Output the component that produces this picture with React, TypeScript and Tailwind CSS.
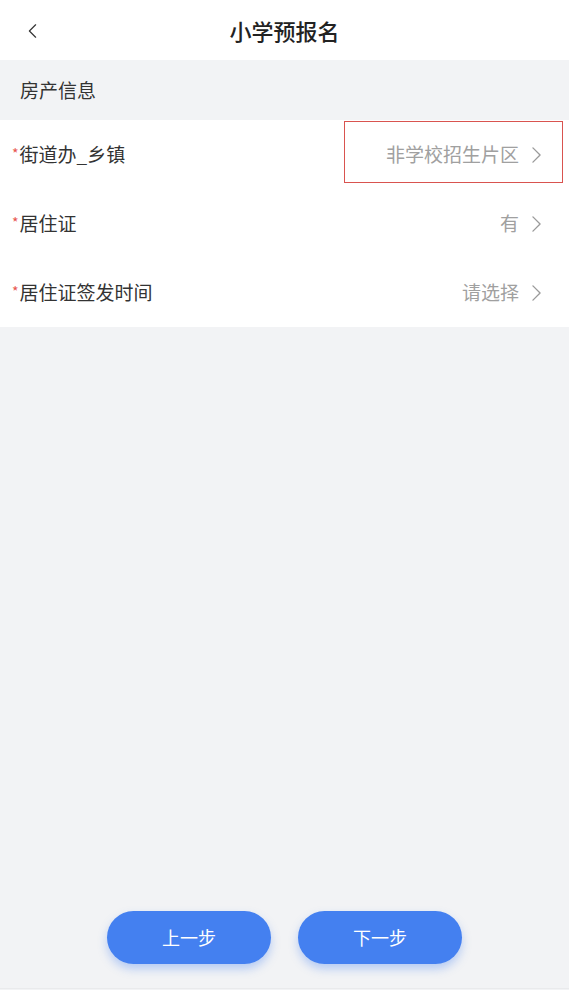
const fields = [
  { label: "街道办_乡镇", value: "非学校招生片区", marked: true },
  { label: "居住证", value: "有" },
  { label: "居住证签发时间", value: "请选择" },
]

function Arrow({ back, className }: { back?: boolean; className?: string }) {
  return (
    <svg viewBox="0 0 10 18" className={className} fill="none" stroke="currentColor" strokeWidth={1.5} strokeLinecap="round" strokeLinejoin="round">
      {back ? <polyline points="9,1 1,9 9,17" /> : <polyline points="1,1 9,9 1,17" />}
    </svg>
  )
}

function FieldRow({ label, value, marked }: { label: string; value: string; marked?: boolean }) {
  return (
    <div className="relative flex h-[69px] items-center justify-between pl-[12px] pr-[28px]">
      <div className="flex items-center">
        <span className="mr-[1px] -mt-[3px] text-[14px] leading-none text-[#e8554e]">*</span>
        <span className="text-[19px] text-[#333333]">{label}</span>
      </div>
      <div className="flex items-center gap-[13px]">
        <span className="text-[19px] text-[#a0a0a0]">{value}</span>
        <Arrow className="h-[16px] w-[9px] text-[#9a9a9a]" />
      </div>
      {marked && (
        <div className="pointer-events-none absolute left-[344px] top-[1px] h-[62px] w-[219px] border-[1.5px] border-[#d9534f]" />
      )}
    </div>
  )
}

export default function App() {
  return (
    <div
      className="flex h-[990px] w-full flex-col bg-[#f2f3f5]"
      style={{ fontFamily: '"Noto Sans CJK SC", "Noto Sans", sans-serif' }}
    >
      <header className="relative flex h-[60px] items-center justify-center bg-white">
        <Arrow back className="absolute left-[28px] top-[24px] h-[14px] w-[9px] text-[#333333]" />
        <h1 className="text-[22px] font-medium text-[#222222]">小学预报名</h1>
      </header>

      <div className="flex h-[60px] items-center px-[20px] text-[19px] text-[#333333]">房产信息</div>

      <div className="bg-white">
        {fields.map((f) => (
          <FieldRow key={f.label} {...f} />
        ))}
      </div>

      <div className="flex-1" />

      <div className="flex justify-center gap-[27px] pb-[24px]">
        <button className="h-[53px] w-[164px] rounded-full bg-[#4480f0] text-[18px] text-white shadow-[0_5px_10px_rgba(68,128,240,0.35)]">
          上一步
        </button>
        <button className="h-[53px] w-[164px] rounded-full bg-[#4480f0] text-[18px] text-white shadow-[0_5px_10px_rgba(68,128,240,0.35)]">
          下一步
        </button>
      </div>
      <div className="h-[2px] border-t border-[#e9eaec]" />
    </div>
  )
}
